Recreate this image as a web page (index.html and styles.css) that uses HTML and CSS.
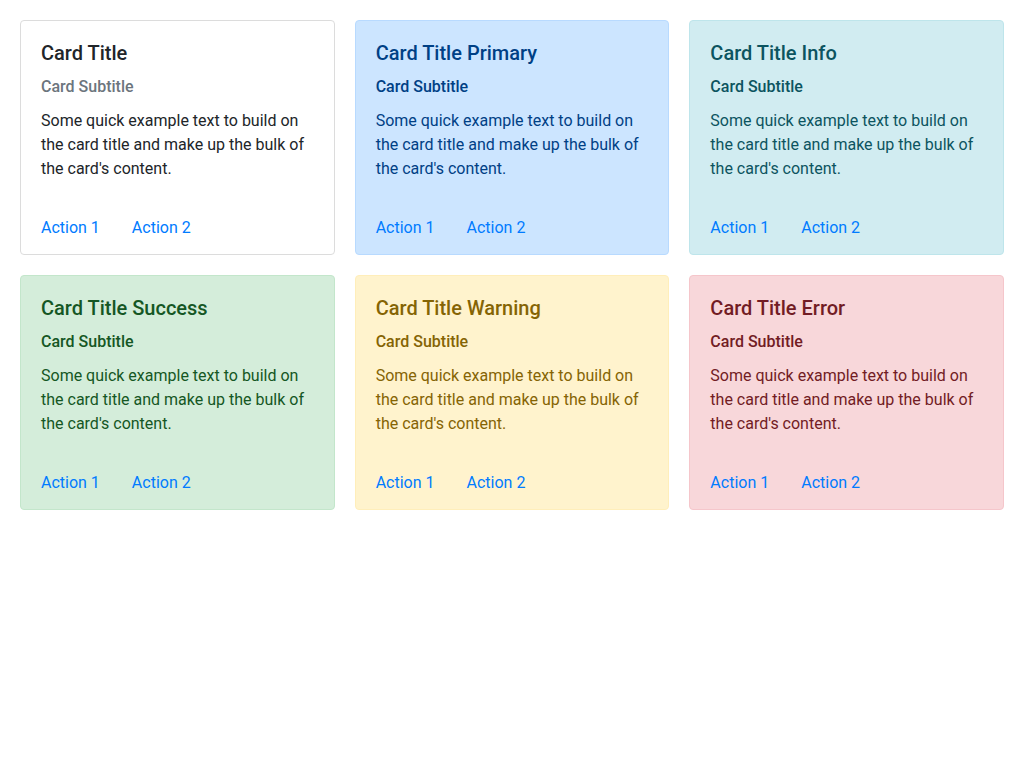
FILE: index.html
```html
<!DOCTYPE html>
<html>
<head>
<meta charset="utf-8">
<link rel="stylesheet" href="styles.css">
</head>
<body>
<div class="grid">
  <div class="card">
    <h2 class="title">Card Title</h2>
    <h3 class="subtitle">Card Subtitle</h3>
    <p class="text">Some quick example text to build on the card title and make up the bulk of the card's content.</p>
    <div class="actions"><a href="#">Action 1</a><a href="#">Action 2</a></div>
  </div>
  <div class="card primary">
    <h2 class="title">Card Title Primary</h2>
    <h3 class="subtitle">Card Subtitle</h3>
    <p class="text">Some quick example text to build on the card title and make up the bulk of the card's content.</p>
    <div class="actions"><a href="#">Action 1</a><a href="#">Action 2</a></div>
  </div>
  <div class="card info">
    <h2 class="title">Card Title Info</h2>
    <h3 class="subtitle">Card Subtitle</h3>
    <p class="text">Some quick example text to build on the card title and make up the bulk of the card's content.</p>
    <div class="actions"><a href="#">Action 1</a><a href="#">Action 2</a></div>
  </div>
  <div class="card success">
    <h2 class="title">Card Title Success</h2>
    <h3 class="subtitle">Card Subtitle</h3>
    <p class="text">Some quick example text to build on the card title and make up the bulk of the card's content.</p>
    <div class="actions"><a href="#">Action 1</a><a href="#">Action 2</a></div>
  </div>
  <div class="card warning">
    <h2 class="title">Card Title Warning</h2>
    <h3 class="subtitle">Card Subtitle</h3>
    <p class="text">Some quick example text to build on the card title and make up the bulk of the card's content.</p>
    <div class="actions"><a href="#">Action 1</a><a href="#">Action 2</a></div>
  </div>
  <div class="card error">
    <h2 class="title">Card Title Error</h2>
    <h3 class="subtitle">Card Subtitle</h3>
    <p class="text">Some quick example text to build on the card title and make up the bulk of the card's content.</p>
    <div class="actions"><a href="#">Action 1</a><a href="#">Action 2</a></div>
  </div>
</div>
</body>
</html>
```
FILE: styles.css
```css
* { box-sizing: border-box; }
html, body { margin: 0; padding: 0; background: #fff; }
body {
  font-family: Roboto, "Noto Sans", sans-serif;
  color: #212529;
  font-size: 16px;
  line-height: 24px;
  padding: 20px;
}
.grid {
  display: grid;
  grid-template-columns: repeat(3, 1fr);
  gap: 20px;
}
.card {
  background: #fff;
  border: 1px solid #dcdcdc;
  border-radius: 4px;
  padding: 20px 20px 14px;
}
.title {
  margin: 0 0 10px;
  font-size: 20px;
  line-height: 24px;
  font-weight: 500;
}
.subtitle {
  margin: 0 0 10px;
  font-size: 16px;
  line-height: 24px;
  font-weight: 500;
  color: #6c757d;
}
.text { margin: 0 0 35px; }
.actions { display: flex; gap: 32px; }
.actions a { color: #007bff; text-decoration: none; }

.primary { background: #cce5ff; border-color: #b8daff; color: #004085; }
.info { background: #d1ecf1; border-color: #bee5eb; color: #0c5460; }
.success { background: #d4edda; border-color: #c3e6cb; color: #155724; }
.warning { background: #fff3cd; border-color: #ffeeba; color: #856404; }
.error { background: #f8d7da; border-color: #f5c6cb; color: #721c24; }
.primary .subtitle, .info .subtitle, .success .subtitle,
.warning .subtitle, .error .subtitle { color: inherit; }
```
